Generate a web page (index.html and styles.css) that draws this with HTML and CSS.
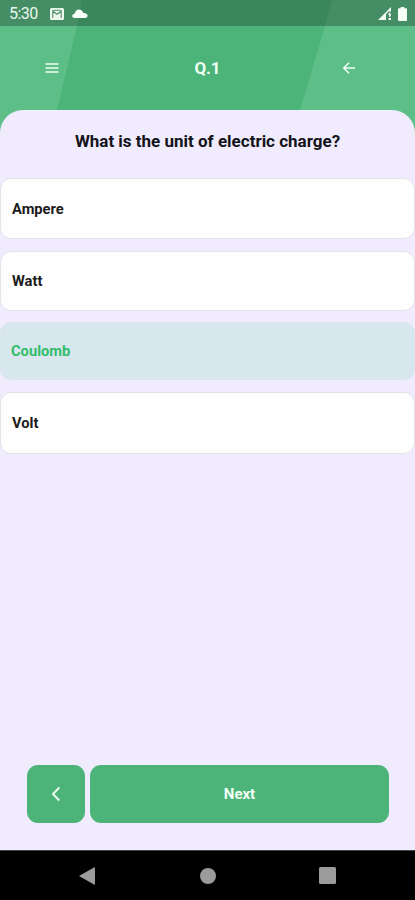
FILE: index.html
```html
<!DOCTYPE html>
<html lang="en">
<head>
<meta charset="utf-8">
<meta name="viewport" content="width=device-width, initial-scale=1">
<title>Q.1</title>
<link rel="stylesheet" href="styles.css">
</head>
<body>
<div class="app">
  <header class="header">
    <svg class="header-art" viewBox="0 0 415 135" aria-hidden="true">
      <path d="M0 0H82L77 26L57 110L51 135H0Z"/>
      <path d="M332 0H415V135H293L300 110L325 26Z"/>
    </svg>
    <div class="status">
      <span class="clock">5:30</span>
      <svg class="mail" width="14" height="12" viewBox="0 0 14 12"><rect width="14" height="12" rx="1.5" fill="#eef8ee"/><path d="M2.8 10V3.2L7 6.3L11.2 3.2V10M3.2 2.2H10.8" fill="none" stroke="#4b8d67" stroke-width="1.1"/></svg>
      <svg class="cloud" width="16" height="10" viewBox="0 0 16 10"><path d="M3 9C-.7 9-.5 5.1 2.6 4.7C3.7-.6 10-1 11.4 4.1C16.4 3.7 17 9 13 9Z" fill="#f8fff8"/></svg>
      <svg class="signal" width="14" height="13" viewBox="0 0 14 13"><path d="M0 13L13 0V4.5H10.5L8 7.3V13ZM10 7L11.5 5.5L13 7V9L11 10.2V8ZM10.5 11H13V13H10.5Z" fill="#f2faf2"/></svg>
      <svg class="battery" width="9" height="14" viewBox="0 0 9 14"><path d="M2.7 1.3V0H6.3V1.3H8Q9 1.3 9 2.3V13Q9 14 8 14H1Q0 14 0 13V2.3Q0 1.3 1 1.3Z" fill="#f8fff8"/></svg>
    </div>
    <div class="bar">
      <svg width="14" height="12" viewBox="0 0 14 12"><path d="M.5 2H13.5M.5 6H13.5M.5 10H13.5" stroke="#effff4" stroke-width="1.3"/></svg>
      <h1 class="title">Q.1</h1>
      <svg width="14" height="14" viewBox="0 0 14 14"><path d="M13 7H2M7 1.8L1.8 7L7 12.2" fill="none" stroke="#effff4" stroke-width="1.6"/></svg>
    </div>
  </header>
  <main class="sheet">
    <h2 class="question">What is the unit of electric charge?</h2>
    <div class="options">
      <div class="option">Ampere</div>
      <div class="option">Watt</div>
      <div class="option selected">Coulomb</div>
      <div class="option">Volt</div>
    </div>
    <div class="actions">
      <div class="button"><svg width="10" height="16" viewBox="0 0 10 16"><path d="M8.3 1.5L2 8L8.3 14.5" fill="none" stroke="#f2fff5" stroke-width="1.9"/></svg></div>
      <div class="button">Next</div>
    </div>
  </main>
  <nav class="nav">
    <svg width="16" height="18" viewBox="0 0 16 18"><path d="M0 9L15 .5Q16 0 16 1V17Q16 18 15 17.5Z"/></svg>
    <svg width="16" height="16" viewBox="0 0 16 16"><circle cx="8" cy="8" r="8"/></svg>
    <svg width="17" height="17" viewBox="0 0 17 17"><rect width="17" height="17" rx="1.5"/></svg>
  </nav>
</div>
</body>
</html>
```

FILE: styles.css
```css
* { box-sizing: border-box; }
body { margin: 0; font-family: Roboto, sans-serif; }
svg { display: block; flex: none; }
.app { display: flex; flex-direction: column; width: 415px; height: 900px; overflow: hidden; background: #f0ecfe; }
.header { position: relative; flex: none; height: 135px; background: #4cb478; }
.header-art { position: absolute; inset: 0; width: 100%; height: 100%; fill: #5dbe87; }
.status { position: relative; display: flex; align-items: center; height: 26px; padding: 1px 8px 0 9px; background: rgba(0, 0, 0, .25); }
.clock { width: 41px; font-size: 16px; line-height: 26px; letter-spacing: -.5px; color: #eaf6ec; }
.cloud { margin-left: 8px; }
.signal { margin-left: auto; }
.battery { margin-left: 6px; }
.bar { position: relative; display: grid; grid-template-columns: 104px 207px 76px; justify-items: center; align-items: center; height: 84px; }
.title { margin: 0; font-size: 17px; font-weight: 700; line-height: 20px; letter-spacing: -.2px; color: #effff4; }
.sheet { position: relative; flex: 1; display: flex; flex-direction: column; margin-top: -25px; border-radius: 23px 23px 0 0; background: #f0ecfe; }
.question { margin: 21px 0 0; height: 47px; font-size: 17px; font-weight: 700; line-height: 21px; text-align: center; color: #141319; white-space: nowrap; }
.options { display: grid; grid-template-rows: 61px 60px 58px 62px; row-gap: 11.6px; }
.option { display: flex; align-items: center; padding-left: 11px; border: 1px solid #e4e2e9; border-radius: 11px; background: #fefefe; font-size: 14.7px; font-weight: 700; color: #1c1c1c; }
.option.selected { padding-left: 11px; border: 0; background: #d8e7ee; color: #32bd6b; }
.actions { display: grid; grid-template-columns: 58px 299px; column-gap: 5px; height: 58px; margin: auto 0 27px 27px; }
.button { display: flex; align-items: center; justify-content: center; border-radius: 11px; background: #4cb478; font-size: 15px; font-weight: 700; color: #f2fff5; }
.nav { flex: none; display: grid; grid-template-columns: 174px 67px 172px; justify-items: center; align-items: center; height: 50px; border-top: 1px solid #47454e; background: #000; fill: #9b9b9b; }
```
